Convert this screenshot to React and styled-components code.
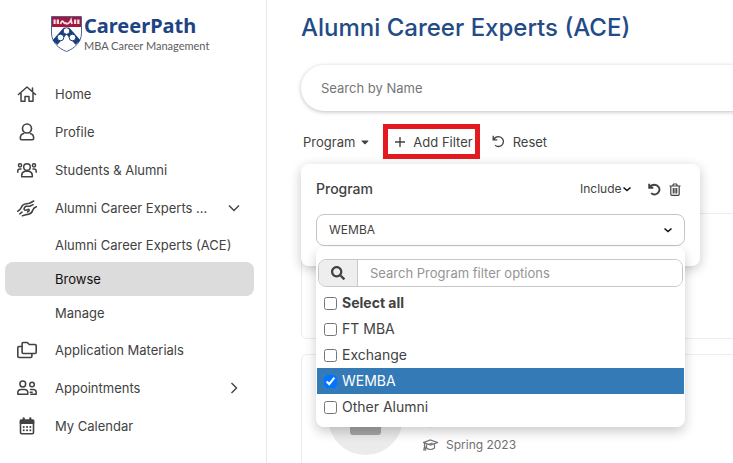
import React from 'react'
import styled, { createGlobalStyle, css } from 'styled-components'
import { FaSearch, FaCaretDown } from 'react-icons/fa'

const GlobalStyle = createGlobalStyle`
  * {
    box-sizing: border-box;
  }

  body {
    margin: 0;
    background: #fff;
    color: #424242;
    font-family: Inter, 'Liberation Sans', sans-serif;
    font-size: 13px;
    line-height: 20px;
  }

  button, input, select {
    font: inherit;
    color: inherit;
  }
`

const Shell = styled.div`
  display: flex;
  height: 100vh;
  overflow: hidden;
`

const Sidebar = styled.nav`
  flex: 0 0 267px;
  padding: 0 12px 0 5px;
  border-right: 1px solid #e6e6e6;
`

const Brand = styled.a`
  display: flex;
  gap: 1px;
  height: 75px;
  padding: 15px 0 0 45px;
  color: #1c4382;
  text-decoration: none;
`

const BrandText = styled.span`
  display: flex;
  flex-direction: column;
`

const BrandName = styled.span`
  font: 700 20px/22px 'Noto Sans', sans-serif;
`

const BrandTagline = styled.span`
  color: #5c5c5c;
  font: 400 11px/18px Lato, sans-serif;
  white-space: nowrap;
`

const NavList = styled.ul`
  margin: 0;
  padding: 0;
  list-style: none;
`

const SubList = styled(NavList)`
  padding: 1px 0;
`

const NavLink = styled.a`
  display: flex;
  align-items: center;
  height: 38px;
  padding: 0 14px 0 12px;
  color: #424242;
  text-decoration: none;

  > svg:first-child {
    margin-right: 18px;
  }
`

const NavLabel = styled.span`
  flex: 1;
`

const SubLink = styled.a`
  display: block;
  padding: 7px 0 7px 50px;
  border-radius: 8px;
  color: #424242;
  text-decoration: none;
  white-space: nowrap;

  ${p => p.$active && css`
    background: #dcdcdc;
    color: #111;
  `}
`

const Main = styled.main`
  flex: 1;
  min-width: 0;
  overflow: hidden;
`

const Content = styled.div`
  min-width: 500px;
  padding: 11px 0 0 34px;
`

const Title = styled.h1`
  margin: 0 0 20px;
  color: #234b86;
  font-size: 24px;
  font-weight: 500;
  line-height: 34px;
`

const NameSearch = styled.input`
  display: block;
  width: 100%;
  height: 46px;
  padding: 0 20px;
  border: 0;
  border-radius: 23px;
  box-shadow: 0 1px 4px rgba(0, 0, 0, 0.25);
  outline: 0;

  &::placeholder {
    color: #757575;
  }
`

const Toolbar = styled.div`
  position: relative;
  display: flex;
  align-items: center;
  gap: 10px;
  margin: 13px 0 54px;
`

const ToolButton = styled.button`
  display: flex;
  align-items: center;
  gap: ${p => p.$gap || 8}px;
  height: 35px;
  padding: 0 2px;
  border: 0;
  background: none;
`

const MarkedButton = styled(ToolButton)`
  padding: 0 2px 0 7px;
  border: 5px solid #e31b20;
`

const FilterPanel = styled.section`
  position: absolute;
  z-index: 1;
  top: 40px;
  left: 0;
  width: 399px;
  padding: 15px 15px 20px;
  border-radius: 8px;
  background: #fff;
  box-shadow: 0 3px 12px rgba(0, 0, 0, 0.22);
`

const PanelHeader = styled.div`
  display: flex;
  align-items: center;
  margin-bottom: 15px;
  padding-right: 4px;
`

const PanelTitle = styled.h2`
  flex: 1;
  margin: 0;
  font-size: 14px;
  font-weight: 500;
  line-height: 20px;
`

const IncludeField = styled.label`
  display: flex;
  align-items: center;
  margin-right: 8px;
  font-size: 12px;
`

const IncludeSelect = styled.select`
  appearance: none;
  padding: 0;
  border: 0;
  background: none;
`

const IconButton = styled.button`
  display: flex;
  margin-left: 8px;
  padding: 0;
  border: 0;
  background: none;
`

const MenuAnchor = styled.div`
  position: relative;
`

const MenuToggle = styled.button`
  display: flex;
  align-items: center;
  justify-content: space-between;
  width: 100%;
  height: 32px;
  padding: 0 11px 0 12px;
  border: 1px solid #c4c4c4;
  border-radius: 8px;
  background: #fff;
  font-size: 12px;
`

const Menu = styled.div`
  position: absolute;
  top: 33px;
  left: 0;
  width: 100%;
  padding: 12px 1px 7px;
  border-radius: 8px;
  background: #fff;
  box-shadow: 0 5px 12px rgba(0, 0, 0, 0.2);
`

const OptionSearch = styled.label`
  display: flex;
  height: 28px;
  margin: 0 1px 3px;
  overflow: hidden;
  border: 1px solid #c8c8c8;
  border-radius: 8px;
`

const SearchAddon = styled.span`
  display: flex;
  align-items: center;
  justify-content: center;
  width: 39px;
  border-right: 1px solid #c8c8c8;
  background: #eee;
`

const OptionInput = styled.input`
  flex: 1;
  min-width: 0;
  padding: 0 12px;
  border: 0;
  outline: 0;

  &::placeholder {
    color: #949494;
  }
`

const Option = styled.label`
  display: flex;
  align-items: center;
  gap: 5px;
  height: 26px;
  padding: 0 7px;
  font-size: 14px;
  font-weight: ${p => p.$bold ? 700 : 400};

  ${p => p.$selected && css`
    background: #337ab7;
    color: #fff;
  `}
`

const Checkbox = styled.input`
  width: 13px;
  height: 13px;
  margin: 0;
  accent-color: #0075ff;
`

const Results = styled.div`
  display: grid;
  gap: 15px;
`

const Card = styled.article`
  display: flex;
  gap: 20px;
  min-height: 126px;
  padding: 25px 26px;
  border: 1px solid #ececec;
  border-radius: 6px;
`

const CardInfo = styled.div`
  display: flex;
  flex-direction: column;
  gap: 4px;
  padding-top: 31px;
  color: #707070;
  font-size: 12px;
`

const InfoRow = styled.div`
  display: flex;
  align-items: center;
  gap: 8px;
  height: 20px;
`

const Icon = ({ size = 20, width = 1.6, children }) => (
  <svg width={size} height={size} viewBox="0 0 20 20" fill="none" stroke="currentColor"
    strokeWidth={width} strokeLinecap="round" strokeLinejoin="round" aria-hidden="true">
    {children}
  </svg>
)

const HomeIcon = () => (
  <Icon width={1.5}>
    <path d="M1.5 10.5 10 3l8.500 7.500M15.500 4v3.500M4 9v8.200h4v-4.700h4v4.700h4V9" />
  </Icon>
)

const ProfileIcon = () => (
  <Icon>
    <circle cx="10" cy="6.500" r="4.500" />
    <path d="M6.700 11.500C4.300 12 3.300 13.600 3.300 16.300q0 1.400 1.400 1.400h10.600q1.400 0 1.400-1.400c0-2.700-1-4.300-3.400-4.800" />
  </Icon>
)

const GroupIcon = () => (
  <Icon width={1.5}>
    <circle cx="10" cy="7" r="3.300" />
    <circle cx="3" cy="5.300" r="1.600" />
    <circle cx="17" cy="5.300" r="1.600" />
    <path d="M4.700 16.700v-1.500c0-2.400 1.300-3.400 3.300-3.900h4c2 .5 3.300 1.500 3.300 3.900v1.500zM.8 12.300v-1.200c0-1.400.7-2 2.200-2h1M19.200 12.300v-1.200c0-1.400-.7-2-2.200-2h-1" />
  </Icon>
)

const HandsIcon = () => (
  <Icon>
    <path d="M.8 13.200C3 12.200 3.700 11 4.400 9.300 5.300 7 6 6.300 8.200 6L12.500 5.200 16.700 3" />
    <path d="M19.300 8.700C17 9.500 16.200 10.700 15.600 12.500 14.800 15 13.800 15.900 11.500 16.200L9.500 16.600 5.500 17.700" />
    <path d="M8.800 8.300C7.300 9.500 6.700 10.500 7.200 11.500S9.500 12.400 11.700 11.300Q13.200 12.700 10.500 13.900M2.800 15.800 5 14.200" />
    <path d="M16 6.600 12.800 8.200H9.500" />
  </Icon>
)

const FoldersIcon = () => (
  <Icon>
    <path d="M6.300 2.500h4l2 2H18q1.200 0 1.200 1.200v6.600q0 1.200-1.200 1.200H6.300q-1.200 0-1.200-1.200V3.700q0-1.200 1.200-1.200z" />
    <path d="M4.800 6.500H2q-1.200 0-1.200 1.200v8.600q0 1.200 1.200 1.200h11.700q1.200 0 1.200-1.200v-2.500" />
  </Icon>
)

const PairIcon = () => (
  <Icon width={1.5}>
    <circle cx="5.800" cy="6" r="2.900" />
    <circle cx="15" cy="6.500" r="2.300" />
    <path d="M.8 16.300v-1.500c0-2 1.300-3.300 3.300-3.300h3.400c2 0 3.300 1.300 3.300 3.300v1.500zM13.500 11.500h2.700c2 0 3 1.200 3 3v1.800h-5.400M13.200 14.300h2" />
  </Icon>
)

const CalendarIcon = () => (
  <Icon>
    <path d="M4.700 4.300h10.600q1.200 0 1.200 1.200v11q0 1.200-1.200 1.200H4.700q-1.200 0-1.200-1.200v-11q0-1.200 1.200-1.200z" />
    <path d="M3.500 4.300h13v3h-13z" fill="currentColor" />
    <path d="M6.700 2.300v2M13.300 2.300v2" strokeWidth="2.200" />
    <path d="M6.700 11h.1M10 11h.1M13.300 11h.1M6.700 14.300h.1M10 14.300h.1M13.300 14.300h.1" strokeWidth="1.900" />
  </Icon>
)

const Chevron = ({ right }) => (
  <svg width="12" height="12" viewBox="0 0 12 12" fill="none" stroke="currentColor" strokeWidth="1.400" aria-hidden="true">
    <path d={right ? 'M3.500 1 8.500 6 3.500 11' : 'M1 3.500 6 8.500 11 3.500'} />
  </svg>
)

const SmallChevron = () => (
  <svg width="10" height="8" viewBox="0 0 10 8" fill="none" stroke="#111" strokeWidth="1.600" aria-hidden="true">
    <path d="M1.500 2.500 5 5.500 8.500 2.500" />
  </svg>
)

const PlusIcon = () => (
  <svg width="10" height="10" viewBox="0 0 10 10" stroke="currentColor" strokeWidth="1.400" aria-hidden="true">
    <path d="M5 0v10M0 5h10" />
  </svg>
)

const ResetIcon = ({ bold }) => (
  <svg width="13" height="13" viewBox="0 0 13 13" fill="none" stroke="currentColor" strokeWidth={bold ? 1.9 : 1.3} aria-hidden="true">
    <path d="M1.200.8v4.100h4.100M1.500 4.700C2.600 2.800 4.400 1.700 6.600 1.700a4.900 4.900 0 1 1-3.500 8.400" />
  </svg>
)

const TrashIcon = () => (
  <svg width="12" height="13" viewBox="0 0 12 13" fill="none" stroke="currentColor" strokeWidth="1.200" aria-hidden="true">
    <path d="M.5 3h11M3.500 3l1-2h3l1 2M1.800 3v8.300q0 1 1 1h6.400q1 0 1-1V3M4.300 5v5.500M6 5v5.500M7.700 5v5.500" />
  </svg>
)

const CapIcon = () => (
  <svg width="15" height="12" viewBox="0 0 15 12" fill="none" stroke="currentColor" strokeWidth="1.200" aria-hidden="true">
    <path d="M7.500 1 14.300 3.500 7.500 6 .7 3.500zM3.500 4.700v4.300q4 3 8 0V4.700M1.500 4v3.500L.8 11h1.900L2 7.500M5.500 5.200l4-1.200" />
  </svg>
)

const PinIcon = () => (
  <svg width="15" height="14" viewBox="0 0 15 14" fill="none" stroke="currentColor" strokeWidth="1.200" aria-hidden="true">
    <path d="M7.500 12.600C5 9.500 3.500 7.500 3.500 5.200a4 4 0 0 1 8 0c0 2.300-1.500 4.300-4 7.400z" />
    <circle cx="7.500" cy="5.200" r="1.300" />
  </svg>
)

const Shield = () => (
  <svg width="33" height="38" viewBox="0 0 33 38" aria-hidden="true">
    <path d="M1.500 1.500h30V18c0 9-7 15.500-15 18.500C8.500 33.500 1.500 27 1.500 18z" fill="#fff" stroke="#4a648f" />
    <path d="M2 2h29v10H2z" fill="#a3163d" />
    <path d="M3.500 4.500H9V9H3.500zM24 4.500h5.500V9H24z" fill="#f0dfe5" />
    <path d="M6.200 4v5.500M26.700 4v5.500" stroke="#a3163d" />
    <path d="M10.500 9q1.500-4.500 3-2t2.500.5q0 2 2 1t3-3.500l1 4" fill="none" stroke="#f0dfe5" strokeWidth="1.800" />
    <path d="M16.500 14.500 28 27.500M16.500 14.500 5 27.500" stroke="#183e80" strokeWidth="6.500" />
    <g fill="#fff" stroke="#183e80">
      <circle cx="16.500" cy="16" r="3.300" />
      <circle cx="10.500" cy="22.500" r="3.300" />
      <circle cx="22.500" cy="22.500" r="3.300" />
    </g>
  </svg>
)

const Avatar = () => (
  <svg width="75" height="75" viewBox="0 0 75 75" aria-hidden="true">
    <circle cx="37.500" cy="37.500" r="37.500" fill="#ebebeb" />
    <circle cx="37.500" cy="25" r="10" fill="#a6a6a6" />
    <path d="M22 45q0-7 7-7h17q7 0 7 7v7q0 3-3 3H25q-3 0-3-3z" fill="#a6a6a6" />
  </svg>
)

const navItems = [
  { label: 'Home', icon: HomeIcon },
  { label: 'Profile', icon: ProfileIcon },
  { label: 'Students & Alumni', icon: GroupIcon },
  {
    label: 'Alumni Career Experts ...',
    icon: HandsIcon,
    arrow: 'down',
    children: ['Alumni Career Experts (ACE)', 'Browse', 'Manage']
  },
  { label: 'Application Materials', icon: FoldersIcon },
  { label: 'Appointments', icon: PairIcon, arrow: 'right' },
  { label: 'My Calendar', icon: CalendarIcon }
]

const options = ['Select all', 'FT MBA', 'Exchange', 'WEMBA', 'Other Alumni']

const NavItem = ({ item }) => (
  <li>
    <NavLink href="#">
      <item.icon />
      <NavLabel>{item.label}</NavLabel>
      {item.arrow && <Chevron right={item.arrow === 'right'} />}
    </NavLink>

    {item.children && (
      <SubList>
        {item.children.map(label => (
          <li key={label}>
            <SubLink href="#" $active={label === 'Browse'}>{label}</SubLink>
          </li>
        ))}
      </SubList>
    )}
  </li>
)

const ProgramFilter = () => (
  <FilterPanel>
    <PanelHeader>
      <PanelTitle>Program</PanelTitle>
      <IncludeField>
        <IncludeSelect aria-label="Filter mode">
          <option>Include</option>
        </IncludeSelect>
        <SmallChevron />
      </IncludeField>
      <IconButton aria-label="Reset filter"><ResetIcon bold /></IconButton>
      <IconButton aria-label="Delete filter"><TrashIcon /></IconButton>
    </PanelHeader>

    <MenuAnchor>
      <MenuToggle aria-haspopup="true" aria-expanded="true">
        WEMBA
        <SmallChevron />
      </MenuToggle>

      <Menu>
        <OptionSearch>
          <SearchAddon><FaSearch size={14} /></SearchAddon>
          <OptionInput placeholder="Search Program filter options" aria-label="Search Program filter options" />
        </OptionSearch>

        {options.map(name => (
          <Option key={name} $bold={name === 'Select all'} $selected={name === 'WEMBA'}>
            <Checkbox type="checkbox" defaultChecked={name === 'WEMBA'} />
            {name}
          </Option>
        ))}
      </Menu>
    </MenuAnchor>
  </FilterPanel>
)

const App = () => (
  <Shell>
    <GlobalStyle />

    <Sidebar>
      <Brand href="#">
        <Shield />
        <BrandText>
          <BrandName>CareerPath</BrandName>
          <BrandTagline>MBA Career Management</BrandTagline>
        </BrandText>
      </Brand>

      <NavList>
        {navItems.map(item => <NavItem key={item.label} item={item} />)}
      </NavList>
    </Sidebar>

    <Main>
      <Content>
        <Title>Alumni Career Experts (ACE)</Title>
        <NameSearch placeholder="Search by Name" aria-label="Search by Name" />

        <Toolbar>
          <ToolButton $gap={4}>Program <FaCaretDown size={12} /></ToolButton>
          <MarkedButton><PlusIcon /> Add Filter</MarkedButton>
          <ToolButton><ResetIcon /> Reset</ToolButton>
          <ProgramFilter />
        </Toolbar>

        <Results>
          <Card />
          <Card>
            <Avatar />
            <CardInfo>
              <InfoRow><PinIcon /></InfoRow>
              <InfoRow><CapIcon /> Spring 2023</InfoRow>
            </CardInfo>
          </Card>
        </Results>
      </Content>
    </Main>
  </Shell>
)

export default App
